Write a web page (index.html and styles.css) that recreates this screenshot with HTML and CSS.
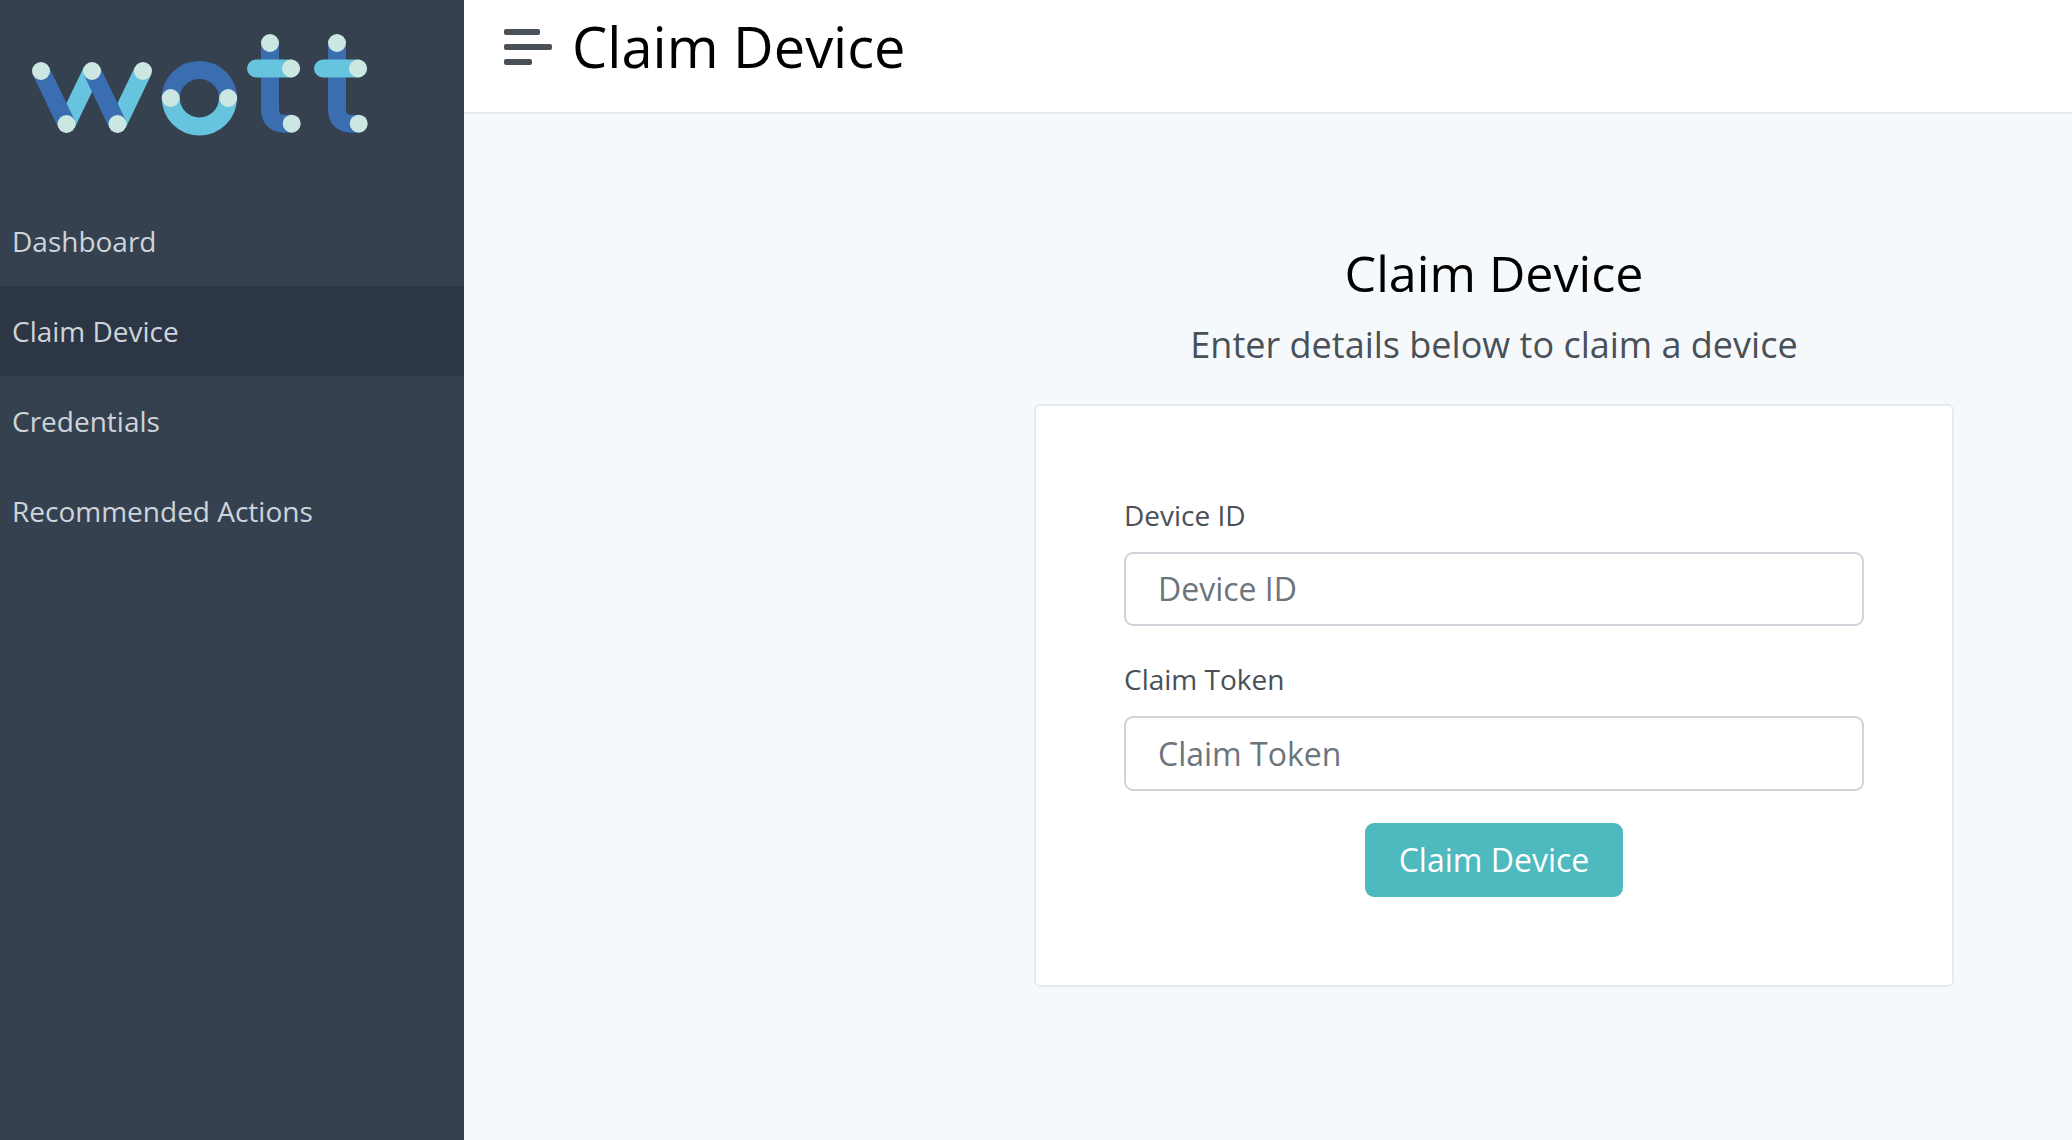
FILE: index.html
```html
<!DOCTYPE html>
<html lang="en">
<head>
<meta charset="utf-8">
<title>Claim Device</title>
<link rel="stylesheet" href="styles.css">
</head>
<body>
<div class="app">
  <aside class="sidebar">
    <a class="brand" href="#" aria-label="WoTT">
      <svg class="logo" viewBox="32 34 336 102" width="336" height="102" fill="none" stroke-width="18">
        <g stroke="#66c4de">
          <path d="M66.5 124L92 71M117.5 124L143 71"/>
          <path d="M170.8 98a28.6 28.4 0 0 0 57.2 0"/>
        </g>
        <g stroke="#3b6db1">
          <path d="M41 71L66.5 124M92 71L117.5 124"/>
          <path d="M170.8 98a28.6 28 0 0 1 57.2 0"/>
          <path d="M270 43V110Q270.5 123.5 284 123.7H291.7M337 43V110Q337.5 123.5 351 123.7H358.7"/>
        </g>
        <path stroke="#66c4de" stroke-linecap="round" d="M256 68.5H291M323 68.5H358"/>
        <g fill="#cce7e2">
          <circle cx="41" cy="71" r="9"/><circle cx="92" cy="71" r="9"/><circle cx="143" cy="71" r="9"/>
          <circle cx="66.5" cy="124" r="9"/><circle cx="117.5" cy="124" r="9"/>
          <circle cx="170.7" cy="98" r="9"/><circle cx="228.2" cy="98" r="9"/>
          <circle cx="270" cy="43" r="9"/><circle cx="291" cy="68.5" r="9"/><circle cx="291.7" cy="123.7" r="9"/>
          <circle cx="337" cy="43" r="9"/><circle cx="358" cy="68.5" r="9"/><circle cx="358.7" cy="123.7" r="9"/>
        </g>
      </svg>
    </a>
    <nav class="nav">
      <a class="nav-link" href="#">Dashboard</a>
      <a class="nav-link active" href="#">Claim Device</a>
      <a class="nav-link" href="#">Credentials</a>
      <a class="nav-link" href="#">Recommended Actions</a>
    </nav>
  </aside>
  <div class="main">
    <header class="topbar">
      <button class="toggle" type="button" aria-label="Toggle sidebar"><span class="bar"></span><span class="bar long"></span><span class="bar short"></span></button>
      <h1 class="page-title">Claim Device</h1>
    </header>
    <main class="content">
      <h2 class="heading">Claim Device</h2>
      <p class="lead">Enter details below to claim a device</p>
      <form class="card">
        <label class="label" for="device">Device ID</label>
        <input class="input" id="device" type="text" placeholder="Device ID">
        <label class="label" for="token">Claim Token</label>
        <input class="input" id="token" type="text" placeholder="Claim Token">
        <button class="submit" type="button">Claim Device</button>
      </form>
    </main>
  </div>
</div>
</body>
</html>
```
FILE: styles.css
```css
* { box-sizing: border-box; }
body {
  margin: 0;
  font-family: "Open Sans", "Noto Sans", sans-serif;
  font-size: 28px;
  line-height: 1.5;
  color: #495057;
  background: #f5f9fc;
}
.app { display: flex; height: 1140px; overflow: hidden; }
.sidebar { flex: 0 0 464px; background: #364150; }
.brand { display: block; height: 196px; padding: 34px 32px 0; }
.logo { display: block; }
.nav { display: flex; flex-direction: column; }
.nav-link {
  height: 90px;
  padding-left: 12px;
  line-height: 90px;
  color: #ced4da;
  text-decoration: none;
}
.nav-link.active { background: #2d3645; }
.main { flex: 1; min-width: 0; }
.topbar {
  display: flex;
  align-items: center;
  gap: 20px;
  height: 114px;
  padding: 13px 40px 31px;
  background: #fff;
  border-bottom: 2px solid #e5e9f2;
}
.toggle {
  display: flex;
  flex-direction: column;
  gap: 9px;
  width: 48px;
  padding: 0;
  border: 0;
  background: none;
}
.bar { width: 36px; height: 6px; border-radius: 2px; background: #495057; }
.bar.long { width: 48px; }
.bar.short { width: 28px; }
.page-title {
  margin: 0 0 2px;
  font-size: 56px;
  font-weight: 400;
  line-height: 66px;
  color: #000;
}
.content { padding: 129px 118px 0 570px; text-align: center; }
.heading {
  margin: 0;
  font-size: 50.2px;
  font-weight: 400;
  line-height: 60px;
  color: #000;
}
.lead { margin: 15px 0 32px; font-size: 36px; line-height: 54px; }
.card {
  display: flex;
  flex-direction: column;
  height: 583px;
  padding: 87.6px 88px;
  background: #fff;
  border: 2px solid #e5e9f2;
  border-radius: 6px;
  text-align: left;
}
.label { height: 42px; margin-bottom: 16px; }
.input {
  width: 100%;
  height: 74.6px;
  margin-bottom: 32px;
  padding: 0 32px;
  font: inherit;
  font-size: 32px;
  background: #fff;
  border: 2px solid #ced4da;
  border-radius: 9px;
}
.input::placeholder { color: #6c757d; opacity: 1; }
.submit {
  align-self: center;
  width: 258px;
  height: 74.4px;
  padding: 0;
  font: inherit;
  font-size: 32px;
  color: #fff;
  background: #4eb9bf;
  border: 0;
  border-radius: 9px;
}
```
